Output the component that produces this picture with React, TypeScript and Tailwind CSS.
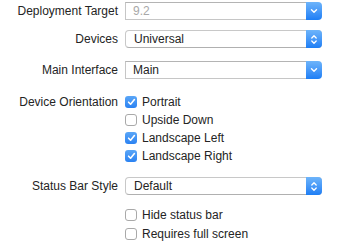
import React from 'react';

const font = { fontFamily: '"Liberation Sans", Arial, sans-serif' };

function ChevronDown() {
  return (
    <svg width="8" height="6" viewBox="0 0 8 6" fill="none">
      <path d="M1.5 1.8 L4 4.2 L6.5 1.8" stroke="white" strokeWidth="1.4" strokeLinecap="round" strokeLinejoin="round" />
    </svg>
  );
}

function ChevronUpDown() {
  return (
    <svg width="8" height="11" viewBox="0 0 8 11" fill="none">
      <path d="M1.8 4 L4 1.8 L6.2 4" stroke="white" strokeWidth="1.3" strokeLinecap="round" strokeLinejoin="round" />
      <path d="M1.8 7 L4 9.2 L6.2 7" stroke="white" strokeWidth="1.3" strokeLinecap="round" strokeLinejoin="round" />
    </svg>
  );
}

function Combo({ value, disabled }: { value: string; disabled?: boolean }) {
  return (
    <div className="flex h-[18px] w-[197px] items-stretch">
      <div className={`flex flex-1 items-center border border-[#c6c6c6] border-t-[#b4b4b4] border-r-0 bg-white pl-[7px] text-[12px] ${disabled ? 'text-[#a8a8a8]' : 'text-[#242424]'}`}>
        {value}
      </div>
      <div className="flex w-[16px] items-center justify-center rounded-r-[4px] bg-gradient-to-b from-[#6db4fa] to-[#1c7ef5]">
        <ChevronDown />
      </div>
    </div>
  );
}

function Popup({ value }: { value: string }) {
  return (
    <div className="flex h-[18px] w-[197px] items-stretch rounded-[4px] border border-[#c8c8c8] border-b-[#b0b0b0] bg-white">
      <div className="flex flex-1 items-center pl-[8px] text-[12px] text-[#242424]">{value}</div>
      <div className="-my-px -mr-px flex w-[16px] items-center justify-center rounded-r-[4px] bg-gradient-to-b from-[#6db4fa] to-[#1c7ef5]">
        <ChevronUpDown />
      </div>
    </div>
  );
}

function Check({ label, checked }: { label: string; checked?: boolean }) {
  return (
    <div className="flex h-[18px] items-center">
      {checked ? (
        <div className="flex h-[12px] w-[12px] items-center justify-center rounded-[3px] bg-gradient-to-b from-[#5aa6f7] to-[#2a82f2]">
          <svg width="9" height="8" viewBox="0 0 9 8" fill="none">
            <path d="M1.6 4.2 L3.6 6.2 L7.4 1.6" stroke="white" strokeWidth="1.6" strokeLinecap="round" strokeLinejoin="round" />
          </svg>
        </div>
      ) : (
        <div className="h-[12px] w-[12px] rounded-[3px] border border-[#a9a9a9] bg-white" />
      )}
      <span className="ml-[5px] text-[12px] text-[#242424]">{label}</span>
    </div>
  );
}

function Row({ label, children, className = '' }: { label?: string; children: React.ReactNode; className?: string }) {
  return (
    <div className={`flex items-start ${className}`}>
      <div className="flex h-[20px] w-[118px] items-center justify-end text-[12px] text-[#242424]">{label}</div>
      <div className="ml-[7px]">{children}</div>
    </div>
  );
}

export default function App() {
  return (
    <div className="h-[246px] w-[349px] overflow-hidden bg-white" style={font}>
      <div className="flex flex-col pt-px">
        <Row label="Deployment Target">
          <div className="pt-px"><Combo value="9.2" disabled /></div>
        </Row>
        <Row label="Devices" className="mt-[8px]">
          <div className="pt-px"><Popup value="Universal" /></div>
        </Row>
        <Row label="Main Interface" className="mt-[11px]">
          <div className="pt-px"><Combo value="Main" /></div>
        </Row>
        <Row label="Device Orientation" className="mt-[12px]">
          <div className="flex flex-col pt-px">
            <Check label="Portrait" checked />
            <Check label="Upside Down" />
            <Check label="Landscape Left" checked />
            <Check label="Landscape Right" checked />
          </div>
        </Row>
        <Row label="Status Bar Style" className="mt-[11px]">
          <div className="pt-px"><Popup value="Default" /></div>
        </Row>
        <Row className="mt-[10px]">
          <div className="flex flex-col">
            <div className="h-[19px]"><Check label="Hide status bar" /></div>
            <div className="h-[19px]"><Check label="Requires full screen" /></div>
          </div>
        </Row>
      </div>
    </div>
  );
}
